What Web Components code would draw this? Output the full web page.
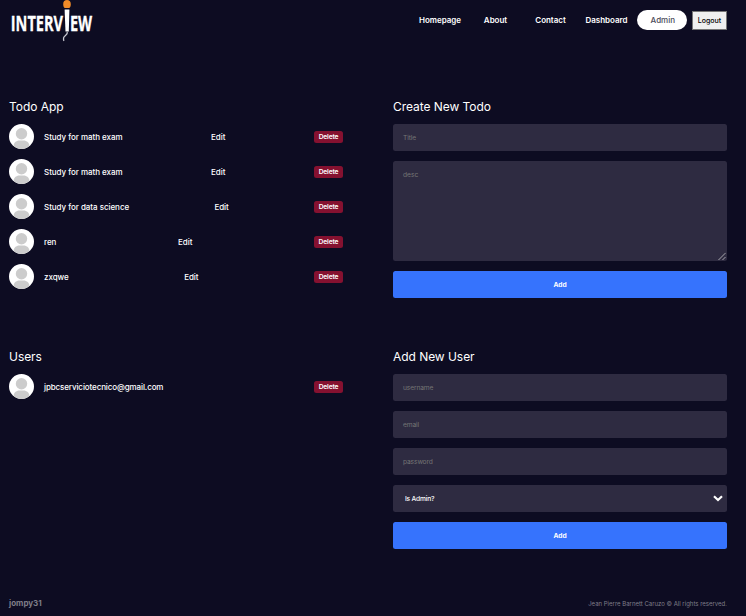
<!DOCTYPE html>
<html lang="en">
<head>
<meta charset="utf-8">
<title>Interview</title>
<style>
html,body{margin:0;background:#0d0c22}
body{font-family:Inter,"Liberation Sans",sans-serif;color:#fff;font-size:8px}
</style>
</head>
<body>
<admin-page></admin-page>
<script>
const define = (name, html) => customElements.define(name, class extends HTMLElement {
  constructor() {
    super();
    const t = document.createElement('template');
    t.innerHTML = html;
    this.attachShadow({mode: 'open'}).append(t.content.cloneNode(true));
  }
});

define('brand-logo', `
<style>:host{display:block;width:90px;height:50px;flex:none}svg{display:block}</style>
<svg width="90" height="50" viewBox="9 0 90 50">
  <path d="M64.600 9.500h4.800l-.6 22h-3.300z" fill="#fff"/>
  <path d="M67.200 32c1 2.800-3.200 3.500-3.600 5.800-.2 1.400-.2 2.200.4 3" fill="none" stroke="#c9c9d2" stroke-width="1.300"/>
  <path d="M63.200 4.200c0-2.800 1.500-4.200 3.800-4.200s3.800 1.400 3.800 4.200c0 2-.7 3.300-1.500 3.800h-4.600c-.8-.5-1.500-1.800-1.500-3.800z" fill="#f28c28"/>
  <g font-family="Open Sans" font-weight="700" font-size="20.500" fill="#fff" stroke="#fff" stroke-width=".3">
  <text transform="translate(10.800 31) scale(.71 1)">INTERV</text>
  <text transform="translate(69.900 31) scale(.71 1)">EW</text></g>
</svg>`);

define('nav-link', `
<style>:host{display:flex;align-items:center;justify-content:center;height:20px;font-size:8px;font-weight:600;letter-spacing:-.03px}
:host([active]){width:50px;box-sizing:border-box;padding-left:1.500px;background:#fff;color:#4a4959;border-radius:10px;font-weight:500}</style><slot></slot>`);

define('top-bar', `
<style>:host{display:flex;justify-content:space-between;align-items:flex-start;height:50px}
nav{display:flex;align-items:center;margin-top:10px;height:20px}
button{box-sizing:border-box;margin:0 0 0 5px;width:35px;height:19px;padding:0;border:1px solid #767676;background:#efefef;color:#000;font:500 7px Inter,sans-serif}</style>
<brand-logo></brand-logo>
<nav><nav-link style="width:55px">Homepage</nav-link><nav-link style="width:56px">About</nav-link><nav-link style="width:54px">Contact</nav-link><nav-link style="width:58px">Dashboard</nav-link><nav-link active style="margin-left:1.500px">Admin</nav-link><button>Logout</button></nav>`);

define('panel-box', `
<style>:host{display:block;min-width:0}h1{margin:0 0 10px;font-size:12px;font-weight:400;line-height:15px;letter-spacing:-.05px}
div{display:flex;flex-direction:column;gap:10px}</style>
<h1><slot name="title"></slot></h1><div><slot></slot></div>`);

define('user-avatar', `
<style>:host{display:block;width:25px;height:25px}svg{display:block}</style>
<svg width="25" height="25" viewBox="0 0 25 25"><defs><clipPath id="c"><circle cx="12.500" cy="12.500" r="12.500"/></clipPath></defs>
<g clip-path="url(#c)"><rect width="25" height="25" fill="#fff"/><circle cx="12.500" cy="9.700" r="5.700" fill="#ccc"/><path d="M4.500 25v-2.500c0-3.800 2.600-6 6-6h4c3.400 0 6 2.200 6 6V25z" fill="#ccc"/></g></svg>`);

define('list-row', `
<style>:host{display:flex;align-items:center;justify-content:space-between;height:25px;font-weight:500;letter-spacing:-.04px}
:host([mail]){letter-spacing:-.11px}
div{display:flex;align-items:center;gap:10px}
button{width:29px;height:12px;padding:0;border:0;border-radius:2.500px;background:#851130;color:#fff;font:600 6.670px/12px Inter,sans-serif;letter-spacing:-.15px}</style>
<div><user-avatar></user-avatar><span><slot></slot></span></div><slot name="edit"></slot><button>Delete</button>`);

define('form-field', `
<style>:host{display:flex;box-sizing:border-box;height:27px;padding:0 10px;align-items:center;border-radius:2.500px;background:#2e2b41;color:#757575;font-size:6.670px;letter-spacing:-.13px;position:relative}
:host([area]){height:100px;align-items:flex-start;padding-top:10px;line-height:8px;letter-spacing:0}
:host([select]){padding:0 4px 0 12px;color:#fff;font-weight:500;letter-spacing:-.2px;justify-content:space-between}
svg{display:none}:host([area]) .grip{display:block;position:absolute;right:1px;bottom:0}
:host([select]) .arrow{display:block}</style>
<span><slot></slot></span>
<svg class="grip" width="8" height="9" viewBox="0 0 8 9"><path d="M.5 8 7.500 1M4.500 8l3-3" stroke="#ddd" stroke-width="1" stroke-dasharray="1 .4"/></svg>
<svg class="arrow" width="10" height="8" viewBox="0 0 10 8"><path d="M1 1.300l4 3.700 4-3.700" fill="none" stroke="#fff" stroke-width="2.200"/></svg>`);

define('primary-button', `
<style>:host{display:block}button{display:block;width:100%;height:27px;border:0;border-radius:2.500px;padding:0;background:#3673fd;color:#fff;font:700 6.670px Inter,sans-serif}</style>
<button><slot></slot></button>`);

define('page-footer', `
<style>:host{display:flex;justify-content:space-between;align-items:center;height:26px;color:#7f7e89}
b{font-size:8px;font-weight:700}span{font-size:6px}</style><b>jompy31</b><span>Jean Pierre Barnett Caruzo © All rights reserved.</span>`);

define('admin-page', `
<style>:host{display:flex;flex-direction:column;box-sizing:border-box;height:616px;padding:0 19px 0 9px}
main{display:grid;grid-template-columns:334px 334px;column-gap:50px;grid-template-rows:250px 241px;padding-top:49px;flex:1}</style>
<top-bar></top-bar>
<main>
<panel-box><span slot="title">Todo App</span>
<list-row>Study for math exam<span slot="edit">Edit</span></list-row>
<list-row>Study for math exam<span slot="edit">Edit</span></list-row>
<list-row>Study for data science<span slot="edit">Edit</span></list-row>
<list-row>ren<span slot="edit">Edit</span></list-row>
<list-row>zxqwe<span slot="edit">Edit</span></list-row></panel-box>
<panel-box><span slot="title">Create New Todo</span>
<form-field>Title</form-field><form-field area>desc</form-field><primary-button>Add</primary-button></panel-box>
<panel-box><span slot="title">Users</span><list-row mail>jpbcserviciotecnico@gmail.com</list-row></panel-box>
<panel-box><span slot="title">Add New User</span>
<form-field>username</form-field><form-field>email</form-field><form-field>password</form-field><form-field select>Is Admin?</form-field><primary-button>Add</primary-button></panel-box>
</main>
<page-footer></page-footer>`);
</script>
</body>
</html>
